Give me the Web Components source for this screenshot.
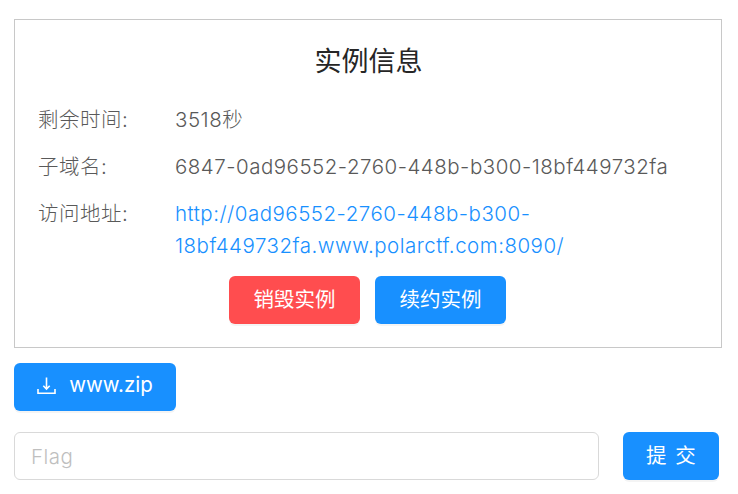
<!DOCTYPE html>
<html lang="zh">
<head>
<meta charset="utf-8">
<title>实例信息</title>
<style>
    html, body {
        margin: 0;
        background: #ffffff;
    }

    body {
        padding: 19px 16px 14px 14px;
        font-family: Inter, "Noto Sans CJK SC", sans-serif;
        font-weight: 300;
        color: #595959;
    }
</style>
</head>
<body>
<instance-card>
    <info-row label="剩余时间:">3518秒</info-row>
    <info-row label="子域名:">6847-0ad96552-2760-448b-b300-18bf449732fa</info-row>
    <info-row label="访问地址:"><a href="#">http://0ad96552-2760-448b-b300-18bf449732fa.www.polarctf.com:8090/</a></info-row>
    <action-button slot="actions" kind="danger" width="131">销毁实例</action-button>
    <action-button slot="actions" width="131">续约实例</action-button>
</instance-card>
<download-row>www.zip</download-row>
<flag-form></flag-form>

<script>
class InstanceCard extends HTMLElement {
    constructor() {
        super();
        this.attachShadow({ mode: "open" });
    }

    connectedCallback() {
        this.shadowRoot.innerHTML = `
            <style>
                :host {
                    display: block;
                    box-sizing: border-box;
                    width: 708px;
                    height: 329px;
                    border: 1px solid #c8c8c8;
                    padding: 23px 22px 0 23px;
                }

                h2 {
                    margin: 0 0 23px;
                    font-size: 27px;
                    line-height: 38px;
                    font-weight: 400;
                    color: #262626;
                    text-align: center;
                }

                .rows {
                    display: flex;
                    flex-direction: column;
                    gap: 15px;
                }

                .actions {
                    display: flex;
                    justify-content: center;
                    gap: 15px;
                    margin-left: -2px;
                    margin-top: 14px;
                }
            </style>
            <h2>实例信息</h2>
            <div class="rows"><slot></slot></div>
            <div class="actions"><slot name="actions"></slot></div>
        `;
    }
}

class InfoRow extends HTMLElement {
    constructor() {
        super();
        this.attachShadow({ mode: "open" });
    }

    connectedCallback() {
        this.shadowRoot.innerHTML = `
            <style>
                :host {
                    display: grid;
                    grid-template-columns: 137px 1fr;
                    font-size: 20.5px;
                    letter-spacing: 0.5px;
                    line-height: 32px;
                    color: #595959;
                }

                ::slotted(a) {
                    color: #1890ff;
                    text-decoration: none;
                }
            </style>
            <span>${this.getAttribute("label")}</span>
            <span><slot></slot></span>
        `;
    }
}

class ActionButton extends HTMLElement {
    constructor() {
        super();
        this.attachShadow({ mode: "open" });
    }

    connectedCallback() {
        const bg = this.getAttribute("kind") === "danger" ? "#ff4d4f" : "#1890ff";
        const width = this.getAttribute("width") || "96";

        this.shadowRoot.innerHTML = `
            <style>
                :host {
                    display: inline-flex;
                }

                button {
                    display: inline-flex;
                    box-sizing: border-box;
                    align-items: center;
                    justify-content: center;
                    gap: 13px;
                    width: ${width}px;
                    height: 48px;
                    padding: 0 0 5px;
                    border: 0;
                    border-radius: 6px;
                    background: ${bg};
                    color: #ffffff;
                    font: inherit;
                    font-weight: 400;
                    font-size: 20.5px;
                    word-spacing: inherit;
                    box-shadow: 0 2px 0 rgba(0, 0, 0, 0.045);
                }
            </style>
            <button type="button"><slot name="icon"></slot><slot></slot></button>
        `;
    }
}

class DownloadRow extends HTMLElement {
    constructor() {
        super();
        this.attachShadow({ mode: "open" });
    }

    connectedCallback() {
        this.shadowRoot.innerHTML = `
            <style>
                :host {
                    display: block;
                    margin-top: 15px;
                    height: 48px;
                }

                svg {
                    margin-top: 2px;
                }
            </style>
            <action-button width="162">
                <svg slot="icon" width="19" height="20" viewBox="0 0 19 20" fill="none" stroke="#fff" stroke-width="1.6">
                    <path d="M9.5 1.5V13M6.3 9.8L9.5 13l3.2-3.2"/>
                    <path d="M1 13v4.2h17V13"/>
                </svg>
                <slot></slot>
            </action-button>
        `;
    }
}

class FlagForm extends HTMLElement {
    constructor() {
        super();
        this.attachShadow({ mode: "open" });
    }

    connectedCallback() {
        this.shadowRoot.innerHTML = `
            <style>
                :host {
                    display: flex;
                    gap: 24px;
                    margin-top: 21px;
                }

                input {
                    box-sizing: border-box;
                    width: 585px;
                    height: 48px;
                    padding: 0 16px;
                    border: 1px solid #d9d9d9;
                    border-radius: 6px;
                    background: #ffffff;
                    font: inherit;
                    font-size: 20.5px;
                    letter-spacing: 0.5px;
                    color: #262626;
                    outline: none;
                }

                input::placeholder {
                    color: #bfbfbf;
                    opacity: 1;
                }

                action-button {
                    word-spacing: 3px;
                }
            </style>
            <input type="text" placeholder="Flag">
            <action-button>提 交</action-button>
        `;
    }
}

customElements.define("instance-card", InstanceCard);
customElements.define("info-row", InfoRow);
customElements.define("action-button", ActionButton);
customElements.define("download-row", DownloadRow);
customElements.define("flag-form", FlagForm);
</script>
</body>
</html>
